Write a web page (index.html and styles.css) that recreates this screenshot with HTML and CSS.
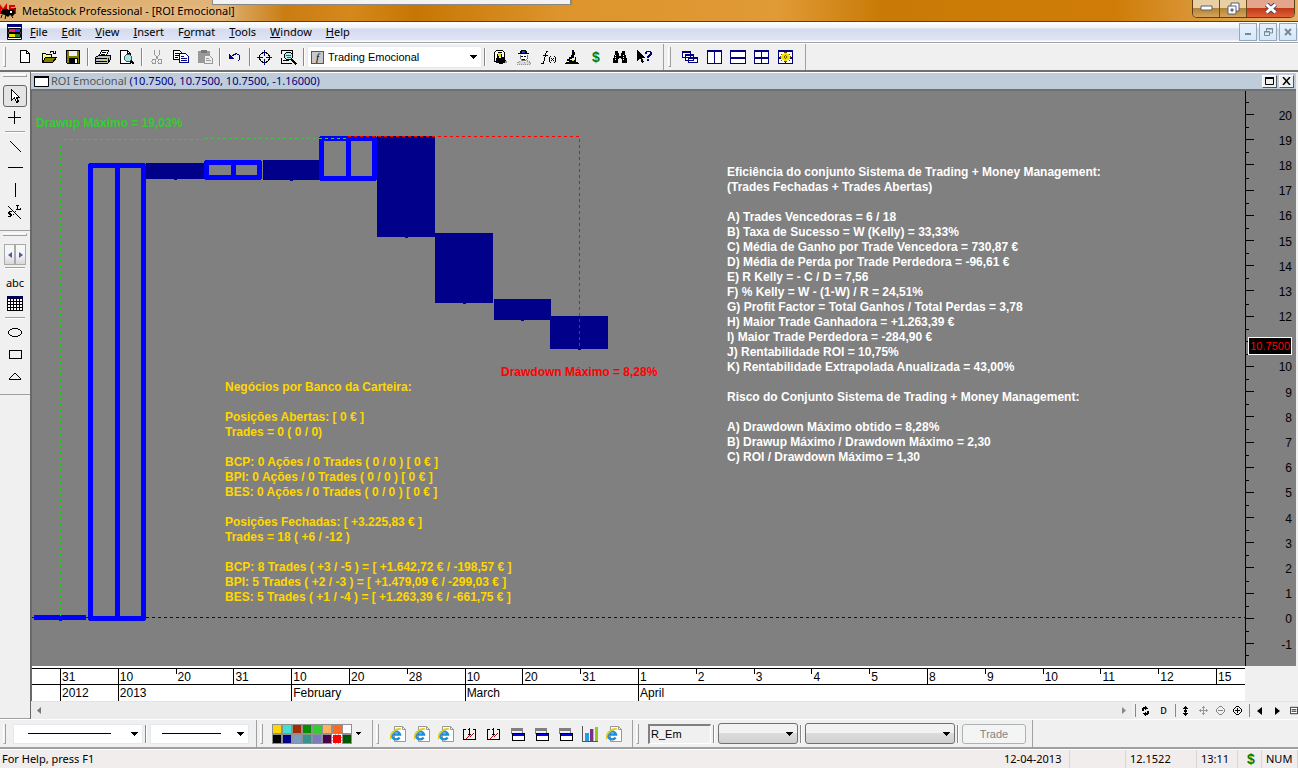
FILE: index.html
```html
<!DOCTYPE html>
<html lang="en">
<head>
  <meta charset="UTF-8">
  <meta name="viewport" content="width=device-width, initial-scale=1.0">
  <title>MetaStock Professional - [ROI Emocional]</title>
  <link rel="stylesheet" href="styles.css">
</head>
<body>
  <!-- Shared icons -->
  <svg class="symbols" aria-hidden="true">
    <symbol id="i-ie" viewBox="0 0 16 16">
      <path d="M4.500 .5h8l3 3v12h-11z" fill="#fff" stroke="#999"/>
      <path d="M12.500 .5v3h3" fill="none" stroke="#999"/>
      <path d="M9.500 11.500A4 4 0 1 1 10 8.500H3" fill="none" stroke="#1f8fd8" stroke-width="2.400"/>
      <path d="M1 13C-1 9 5 2 11 3" fill="none" stroke="#e8c818" stroke-width="1.600"/>
    </symbol>
    <symbol id="i-import" viewBox="0 0 16 16">
      <path d="M4 12h1v-1h1v-1h1V9h1v1h1V9h1V8h1V7h1v1h-1v1h-1v1H9v1H8v-1H7v1H6v1H5v1H4z" fill="#c00000"/>
      <path d="M1 3h3v1H2v9h11V4h-2V3h3v11H1zM7 2h1v7H7zM6 3h1v1H6zM6 8h3v1H6z"/>
    </symbol>
    <symbol id="i-windows" viewBox="0 0 16 16">
      <path d="M1 2h12v3H1z" fill="#808080"/>
      <path d="M1 5h1v3H1zM12 5h1v2h-1z" fill="#808080"/>
      <path d="M2.500 7.500h12v7h-12z" fill="#fff" stroke="#000"/>
      <path d="M3 8h11v2H3z" fill="#0000ff"/>
    </symbol>
    <symbol id="i-down" viewBox="0 0 7 4"><path d="M0 0h7v1H0zM1 1h5v1H1zM2 2h3v1H2zM3 3h1v1H3z"/></symbol>
  </svg>

  <!-- Title bar -->
  <header class="titlebar">
    <svg class="app-icon" width="20" height="18" viewBox="0 0 20 18" aria-hidden="true">
      <path d="M0 12V4l3 4 3-4v8M15 4h-5v3h5v4h-5" fill="none" stroke="#e00000" stroke-width="2"/>
      <path d="M1 9q4-4 8-1l4-1q2 1 2 4l-2 3-3-1-2 2-3-2-4-1z"/>
      <path d="M2 13l-1 3M6 13l-1 4M11 13l2 3M13 8l3-2" stroke="#000" fill="none"/>
      <path d="M10 9h2v2h-2z" fill="#fff"/>
    </svg>
    <h1 class="title">MetaStock Professional - [ROI Emocional]</h1>
    <div class="behind-window"></div>
    <div class="window-buttons">
      <button aria-label="Minimize"><svg width="13" height="7" viewBox="0 0 13 7"><path d="M1 1h11v4H1z" fill="#fff" stroke="#555f70"/></svg></button>
      <button aria-label="Restore"><svg width="13" height="13" viewBox="0 0 13 13"><path d="M4 1h8v8H4z" fill="#fff" stroke="#555f70"/><path d="M1 4h8v8H1z" fill="#fff" stroke="#555f70"/><path d="M4 7h2v2H4z" fill="#c89858" stroke="#555f70"/></svg></button>
      <button class="close" aria-label="Close"><svg width="14" height="11" viewBox="0 0 14 11"><path d="M2.500 1.500l9 8M11.500 1.500l-9 8" stroke="#5a4a58" stroke-width="5"/><path d="M2.500 1.500l9 8M11.500 1.500l-9 8" stroke="#fff" stroke-width="3"/></svg></button>
    </div>
  </header>

  <!-- Menu -->
  <nav class="menubar">
    <svg class="doc-icon" width="16" height="16" viewBox="0 0 16 16" aria-hidden="true">
      <path d="M.5 .5h14v15H.5z" fill="#fff" stroke="#000080"/>
      <path d="M0 0h15v3H0z" fill="#000080"/>
      <path d="M2 5h6v3H2z" fill="#f02060"/><path d="M8 5h5v3H8z" fill="#2040ff"/>
      <path d="M2 10h6v3H2z" fill="#e8e000"/><path d="M8 10h5v3H8z" fill="#208020"/>
      <path d="M1.500 4.500h12v4h-12zM1.500 9.500h12v4h-12z" fill="none" stroke="#000"/>
    </svg>
    <a href="#"><u>F</u>ile</a>
    <a href="#"><u>E</u>dit</a>
    <a href="#"><u>V</u>iew</a>
    <a href="#"><u>I</u>nsert</a>
    <a href="#">F<u>o</u>rmat</a>
    <a href="#"><u>T</u>ools</a>
    <a href="#"><u>W</u>indow</a>
    <a href="#"><u>H</u>elp</a>
    <div class="mdi-buttons">
      <button aria-label="Minimize chart"><svg width="8" height="8" viewBox="0 0 8 8"><path d="M1 5h6v2H1z" fill="#76899a"/></svg></button>
      <button aria-label="Restore chart"><svg width="9" height="8" viewBox="0 0 9 8"><path d="M2.500 3V.5h6V5H6M2 1h7M.5 3.500h5v4h-5zM0 4h6" fill="none" stroke="#76899a"/></svg></button>
      <button aria-label="Close chart"><svg width="8" height="8" viewBox="0 0 8 8"><path d="M1 1l6 6M7 1L1 7" stroke="#76899a" stroke-width="2"/></svg></button>
    </div>
  </nav>

  <!-- Main toolbar -->
  <div class="toolbar">
    <div class="band">
      <span class="grip"></span>
      <button aria-label="New"><svg class="px" viewBox="0 0 16 16"><path d="M3.500 1.500h6l3 3v9h-9z" fill="#fff" stroke="#000"/><path d="M9.500 1.500v3h3" fill="none" stroke="#000"/></svg></button>
      <button aria-label="Open"><svg class="px" viewBox="0 0 16 16"><path d="M1.500 13.500v-9h3l1 1h5v3" fill="#ffff80" stroke="#000"/><path d="M1.500 13.500l3-5h11l-4 5z" fill="#808000" stroke="#000"/><path d="M9 3.500q2-2 4 0M14.500 2v2.500H12" fill="none" stroke="#000"/></svg></button>
      <button aria-label="Save"><svg class="px" viewBox="0 0 16 16"><path d="M1.500 1.500h13v13h-12l-1-1z" fill="#808000" stroke="#000"/><path d="M4 2h8v5H4z" fill="#f0f0f0"/><path d="M4 9h9v5H4z"/><path d="M10 10h2v4h-2z" fill="#fff"/></svg></button>
      <span class="sep"></span>
      <button aria-label="Print"><svg class="px" viewBox="0 0 16 16"><path d="M4.500 6.500l2-5h7l-2 5" fill="#fff" stroke="#000"/><path d="M7 3.500h4M6 5.500h4" stroke="#000"/><path d="M.5 8.500l3-2h12v4l-3 4H.5z" fill="#c0c0c0" stroke="#000"/><path d="M1 9.500h11M1 12.500h11M13 9v4M15 7v3" stroke="#000"/><path d="M8 11h3v1H8z" fill="#e0e000"/></svg></button>
      <button aria-label="Print preview"><svg class="px" viewBox="0 0 16 16"><path d="M1.500 1.500h7l3 3v10h-10z" fill="#fff" stroke="#000"/><path d="M8.500 1.500v3h3" fill="none" stroke="#000"/><circle cx="9" cy="9" r="3.500" fill="#a0e8e8" stroke="#555"/><path d="M12 12l3 3" stroke="#000" stroke-width="2"/></svg></button>
      <span class="sep"></span>
      <button aria-label="Cut" disabled><svg class="px" viewBox="0 0 16 16"><path d="M5.500 1v4l4 6M10.500 1v4l-4 6" fill="none" stroke="#999"/><circle cx="5" cy="12.500" r="2" fill="none" stroke="#999"/><circle cx="11" cy="12.500" r="2" fill="none" stroke="#999"/></svg></button>
      <button aria-label="Copy"><svg class="px" viewBox="0 0 16 16"><path d="M.5 1.500h6l2 2v7h-8z" fill="#fff" stroke="#000"/><path d="M2 4.500h4M2 6.500h4M2 8.500h3" stroke="#000"/><path d="M6.500 4.500h6l3 3v6h-9z" fill="#fff" stroke="#000080"/><path d="M8 7.500h3M8 9.500h6M8 11.500h6" stroke="#000080"/></svg></button>
      <button aria-label="Paste" disabled><svg class="px" viewBox="0 0 16 16"><path d="M1 2h12v12H1z" fill="#999"/><path d="M4 1h6v3H4z" fill="#777"/><path d="M7.500 6.500h5l3 3v5h-8z" fill="#eee" stroke="#999"/><path d="M9 9.500h3M9 11.500h5" stroke="#999"/></svg></button>
      <span class="sep"></span>
      <button aria-label="Undo"><svg class="px" viewBox="0 0 16 16"><path d="M4 8q5-5 8-2 2 3-1 6" fill="none" stroke="#000080"/><path d="M2 5v5h5z" fill="#000080"/></svg></button>
      <span class="sep"></span>
      <button aria-label="Crosshair"><svg class="px" viewBox="0 0 16 16"><circle cx="7.500" cy="8.500" r="5" fill="none" stroke="#000"/><path d="M7.500 1v6M7.500 10v6M0 8.500h6M9 8.500h6" stroke="#000080"/></svg></button>
      <button aria-label="Explorer"><svg class="px" viewBox="0 0 16 16"><path d="M.5 4.500v-3h11v3M.5 8.500v6h10M2 11.500h5" fill="none" stroke="#000"/><circle cx="7.500" cy="7" r="4" fill="#b0f0f0" stroke="#000"/><path d="M5 6.500h5M6 8.500h4" stroke="#008080"/><path d="M10.500 10.500l5 5" stroke="#000" stroke-width="2"/></svg></button>
      <span class="sep"></span>
      <div class="combo template">
        <span class="combo-icon">f</span>
        <select aria-label="Template"><option>Trading Emocional</option></select>
        <svg class="arrow"><use href="#i-down"/></svg>
      </div>
      <span class="sep"></span>
      <button aria-label="Downloader"><svg class="px" viewBox="0 0 16 16"><path d="M4.500 1.500h6l2 2v9h-10v-9z" fill="#fff" stroke="#000"/><path d="M5.500 4.500v5M9.500 4.500v4M6 3.500h4" stroke="#000"/><path d="M6 4h3v4H6z" fill="#f0e800"/><path d="M4 9h2V7h1v2h3V8h2v3h2v3h-3v1H7v-1H4z"/><path d="M13 12h2v2h-2z" fill="#999"/></svg></button>
      <button aria-label="Expert advisor"><svg class="px" viewBox="0 0 16 16"><path d="M5 1h5v1h1v2h2v1H2V4h2V2h1z"/><path d="M6 2h3v2H6z" fill="#2040d0"/><path d="M4.500 5.500v4l2 2h3l2-2v-4" fill="#fff" stroke="#777"/><path d="M5 7h2v1H5zM8 7h2v1H8zM6 10h3v1H6z"/><path d="M1.500 15.500v-2l4-2 2 2h1l2-2 4 2v2z" fill="#d8d8d8" stroke="#999" stroke-dasharray="1 1"/></svg></button>
      <button aria-label="Indicator builder"><svg class="px" viewBox="0 0 16 16"><path d="M8 2H6.500L3.500 14H1M3 6.500h5" fill="none" stroke="#000"/><path d="M9 8h1v5H9zM10 7h1v1h-1zM10 13h1v1h-1zM15 8h1v5h-1zM14 7h1v1h-1zM14 13h1v1h-1zM11 9h1v1h-1zM13 9h1v1h-1zM12 10h1v1h-1zM11 11h1v1h-1zM13 11h1v1h-1z"/></svg></button>
      <button aria-label="Explorer scope"><svg class="px" viewBox="0 0 16 16"><path d="M8 1h2v2h1v3h-1v3H7V6h1zM5 8h3v2H5zM3 10h3v1h3v1H3zM11 8h1v4h-1zM10 11h1v1h-1zM5 12h7v1H5zM2 13h12v1h1v1H1v-1h1z"/><path d="M8 11h2v1H8z" fill="#e0e000"/></svg></button>
      <button class="dollar" aria-label="System tester">$</button>
      <button aria-label="Find"><svg class="px" viewBox="0 0 16 16"><path d="M3 2h3v2h1v3h2V4h1V2h3v3l2 5v4h-5v-4H9v-1H7v1H6v4H1v-4l2-5z"/><path d="M3.500 6v5M11.500 6v5" stroke="#fff" stroke-dasharray="1 1"/></svg></button>
      <button aria-label="Context help"><svg class="px" viewBox="0 0 16 16"><path d="M1 1v11l3-3 2 5 2-1-2-4h3z"/><path d="M9 3h1V2h5v1h1v3h-1v1h-1v1h-1v1h-2V7h1V6h1V5h1V3h-3v2H9zM11 10h2v2h-2z" fill="#000080"/></svg></button>
    </div>
    <div class="band second">
      <span class="grip"></span>
      <button aria-label="Cascade"><svg class="px" viewBox="0 0 16 16"><path d="M.5 2.500h8v6h-8zM3.500 5.500h8v6h-8zM6.500 8.500h9v5h-9z" fill="#fff" stroke="#000080"/><path d="M0 2h9v2H0zM3 5h9v2H3zM6 8h10v2H6z" fill="#000080"/></svg></button>
      <button aria-label="Tile vertically"><svg class="px" viewBox="0 0 16 16"><path d="M1.500 1.500h14v13h-14zM8.500 2v12" fill="#fff" stroke="#000080"/><path d="M1 1h15v2H1z" fill="#000080"/></svg></button>
      <button aria-label="Tile horizontally"><svg class="px" viewBox="0 0 16 16"><path d="M.5 1.500h15v13H.5z" fill="#fff" stroke="#000080"/><path d="M0 1h16v2H0zM0 8h16v2H0z" fill="#000080"/></svg></button>
      <button aria-label="Tile"><svg class="px" viewBox="0 0 16 16"><path d="M.5 1.500h14v13H.5zM7.500 2v12" fill="#fff" stroke="#000080"/><path d="M0 1h15v2H0zM0 8h15v2H0z" fill="#000080"/></svg></button>
      <button aria-label="Layout"><svg class="px" viewBox="0 0 16 16"><path d="M.5 1.500h14v13H.5zM7.500 2v12" fill="#fff" stroke="#000080"/><path d="M0 1h15v2H0zM0 8h15v2H0z" fill="#000080"/><path d="M6 4h3v1h2v2h1v3h-1v1H9v1H6v-1H4v-1H3V7h1V5h2z" fill="#f0e000"/><path d="M6 3h3v1H6zM3 5h1v1H3zM11 5h1v1h-1zM2 7h1v2H2zM12 7h1v2h-1zM3 11h1v1H3zM11 11h1v1h-1zM6 12h3v1H6zM6 7h1v2H6zM8 7h1v2H8zM7 6h1v1H7zM7 9h1v1H7z" fill="#705000"/></svg></button>
    </div>
  </div>

  <main class="workspace">
    <!-- Drawing tools -->
    <aside class="tools">
      <div class="tool-band">
        <span class="hgrip"></span>
        <button class="pressed" aria-label="Pointer"><svg class="px" viewBox="0 0 16 16"><path d="M4.500 1.500v11l3-3 2 5 2-1-2-4h3z" fill="#fff" stroke="#000"/></svg></button>
        <button aria-label="Cross"><svg class="px" viewBox="0 0 16 16"><path d="M7.500 1v13M1 7.500h13" stroke="#000"/></svg></button>
        <span class="hsep"></span>
        <button aria-label="Trendline"><svg class="px" viewBox="0 0 16 16"><path d="M3 3l11 11" stroke="#000"/></svg></button>
        <button aria-label="Horizontal line"><svg class="px" viewBox="0 0 16 16"><path d="M1 7.500h15" stroke="#000"/></svg></button>
        <button aria-label="Vertical line"><svg class="px" viewBox="0 0 16 16"><path d="M8.500 1v14" stroke="#000"/></svg></button>
        <button aria-label="Semi-log trendline"><svg class="px" viewBox="0 0 16 16"><path d="M1 2l13 13" stroke="#000"/><path d="M9 1h3v1h-1v3h2V4h1v2H9V5h1V2H9zM2 7h3v1H3v1h1v1h1v2H4v1H1v-1h2v-1H2v-1H1V8h1zM6 10h1v1H6zM8 7h1v1H8z"/></svg></button>
      </div>
      <div class="tool-band lower">
        <span class="hgrip"></span>
        <div class="spinner">
          <button aria-label="Previous"><svg width="4" height="6" viewBox="0 0 4 6"><path d="M4 0v6L0 3z" fill="#3f5fa8"/></svg></button>
          <button aria-label="Next"><svg width="4" height="6" viewBox="0 0 4 6"><path d="M0 0v6l4-3z" fill="#3f5fa8"/></svg></button>
        </div>
        <span class="hsep"></span>
        <button class="abc">abc</button>
        <button aria-label="Grid"><svg class="px" viewBox="0 0 16 16"><path d="M.5 .5h15v14H.5zM3.500 2v12M6.500 2v12M9.500 2v12M12.500 2v12M0 5.500h16M0 8.500h16M0 11.500h16" fill="#fff" stroke="#000"/><path d="M0 0h16v3H0z" fill="#000050"/></svg></button>
        <span class="hsep"></span>
        <button aria-label="Ellipse"><svg class="px" viewBox="0 0 16 16"><ellipse cx="8" cy="8.500" rx="6.500" ry="4" fill="none" stroke="#000"/></svg></button>
        <button aria-label="Rectangle"><svg class="px" viewBox="0 0 16 16"><path d="M2.500 4.500h12v8h-12z" fill="none" stroke="#000"/></svg></button>
        <button aria-label="Triangle"><svg class="px" viewBox="0 0 16 16"><path d="M2 11.500h12M2 11l6-6 6 6" fill="none" stroke="#000"/></svg></button>
      </div>
    </aside>

    <section class="chart-window">
      <div class="chart-title">
        <svg width="15" height="11" viewBox="0 0 15 11" aria-hidden="true"><path d="M.5 .5h14v10H.5z" fill="#fff" stroke="#000"/><path d="M0 0h15v2H0z"/></svg>
        <p><span class="name">ROI Emocional</span> (10.7500, 10.7500, 10.7500, -1.16000)</p>
        <button aria-label="Maximize"><svg width="9" height="8" viewBox="0 0 9 8"><path d="M.5 .5h8v7h-8z" fill="none" stroke="#000"/><path d="M0 0h9v2H0z"/></svg></button>
        <button aria-label="Close"><svg width="9" height="8" viewBox="0 0 9 8"><path d="M1 0l7 8M8 0L1 8" stroke="#000" stroke-width="1.500"/></svg></button>
      </div>

      <div class="chart">
        <div class="plot">
          <svg class="candles" width="1213" height="575" viewBox="0 0 1213 575" role="img" aria-label="ROI candlestick chart">
            <path d="M0 526.500h1213" class="baseline"/>
            <!-- Down candles -->
            <g fill="#00008b">
              <path d="M114 72h58v16h-58zM142 88h3v1h-3z"/>
              <path d="M231 69h56v20h-56zM258 89h3v1h-3z"/>
              <path d="M345 45h58v101h-58zM373 146h3v1h-3z"/>
              <path d="M403 142h58v70h-58zM431 212h3v1h-3z"/>
              <path d="M462 208h57v21h-57zM489 229h3v1h-3z"/>
              <path d="M518 225h58v33h-58zM546 258h3v1h-3z"/>
            </g>
            <!-- Up candles -->
            <path d="M2 524h52v5H2zM27 529h3v1h-3z" fill="#00f"/>
            <g fill="none" stroke="#00f" stroke-width="5" stroke-linejoin="round">
              <path d="M58.500 74.500h53v453h-53zM85.500 74v453"/>
              <path d="M174.500 71.500h53v15h-53zM201.500 72v15"/>
              <path d="M289.500 47.500h53v40h-53zM316.500 48v40"/>
            </g>
            <g fill="none" stroke-dasharray="3 3">
              <path d="M28.500 525V51" stroke="#00e000"/>
              <path d="M32 48.500h140M173 47.500h144" stroke="#32cd32"/>
              <path d="M316 45.500h232M547.500 48v209" stroke="#f00"/>
            </g>
          </svg>

          <p class="note drawup">Drawup Máximo = 19,03%</p>
          <p class="note drawdown">Drawdown Máximo = 8,28%</p>

          <p class="note portfolio">Negócios por Banco da Carteira:

Posições Abertas: [ 0 € ]
Trades = 0 ( 0 / 0)

BCP: 0 Ações / 0 Trades ( 0 / 0 ) [ 0 € ]
BPI: 0 Ações / 0 Trades ( 0 / 0 ) [ 0 € ]
BES: 0 Ações / 0 Trades ( 0 / 0 ) [ 0 € ]

Posições Fechadas: [ +3.225,83 € ]
Trades = 18 ( +6 / -12 )

BCP: 8 Trades ( +3 / -5 ) = [ +1.642,72 € / -198,57 € ]
BPI: 5 Trades ( +2 / -3 ) = [ +1.479,09 € / -299,03 € ]
BES: 5 Trades ( +1 / -4 ) = [ +1.263,39 € / -661,75 € ]</p>

          <p class="note stats">Eficiência do conjunto Sistema de Trading + Money Management:
(Trades Fechadas + Trades Abertas)

A) Trades Vencedoras = 6 / 18
B) Taxa de Sucesso = W (Kelly) = 33,33%
C) Média de Ganho por Trade Vencedora = 730,87 €
D) Média de Perda por Trade Perdedora = -96,61 €
E) R Kelly = - C / D = 7,56
F) % Kelly = W - (1-W) / R = 24,51%
G) Profit Factor = Total Ganhos / Total Perdas = 3,78
H) Maior Trade Ganhadora = +1.263,39 €
I) Maior Trade Perdedora = -284,90 €
J) Rentabilidade ROI = 10,75%
K) Rentabilidade Extrapolada Anualizada = 43,00%

Risco do Conjunto Sistema de Trading + Money Management:

A) Drawdown Máximo obtido = 8,28%
B) Drawup Máximo / Drawdown Máximo = 2,30
C) ROI / Drawdown Máximo = 1,30</p>
        </div>

        <ol class="price-axis">
          <li>20</li><li>19</li><li>18</li><li>17</li><li>16</li><li>15</li><li>14</li><li>13</li><li>12</li>
          <li><span class="last-price">10.7500</span></li>
          <li>10</li><li>9</li><li>8</li><li>7</li><li>6</li><li>5</li><li>4</li><li>3</li><li>2</li><li>1</li><li>0</li><li>-1</li>
        </ol>
      </div>

      <!-- Date axis -->
      <div class="date-axis">
        <div class="days">
          <span class="pad"></span>
          <span class="full">31</span><span class="full">10</span><span>20</span><span class="full">31</span>
          <span class="full">10</span><span class="full">20</span><span>28</span><span class="full">10</span>
          <span class="full">20</span><span>31</span><span class="full">1</span><span>2</span><span>3</span>
          <span>4</span><span>5</span><span class="full">8</span><span>9</span><span>10</span><span>11</span>
          <span>12</span><span class="full">15</span>
        </div>
        <div class="months">
          <span class="y2012">2012</span>
          <span class="y2013">2013</span>
          <span class="feb">February</span>
          <span class="mar">March</span>
          <span class="apr">April</span>
        </div>
      </div>

      <div class="scroll-row">
        <div class="scrollbar">
          <button aria-label="Scroll left"><svg width="4" height="7" viewBox="0 0 4 7"><path d="M4 0v7L0 3.500z" fill="#777"/></svg></button>
          <button aria-label="Scroll right"><svg width="4" height="7" viewBox="0 0 4 7"><path d="M0 0v7l4-3.500z" fill="#888"/></svg></button>
        </div>
        <div class="zoom-tools">
          <button class="first" aria-label="Refresh"><svg class="small" viewBox="0 0 9 10"><path d="M1 2h1V1h2V0h1v1h1v1h1v1H5v1H4V3H3v2H1zM7 5h1v3H7v1H5v1H4V9H3V8H2V7h2V6h1v1h1V5z"/></svg></button>
          <button class="periodicity">D</button>
          <button class="first" aria-label="Scale"><svg class="small" viewBox="0 0 9 10"><path d="M4 0h1v1h1v1h1v1H5v4h2v1H6v1H5v1H4V9H3V8H2V7h2V3H2V2h1V1h1z"/><path d="M3 4h3v2H3z"/></svg></button>
          <button aria-label="Move" disabled><svg class="small" viewBox="0 0 9 10"><path d="M4 0h1v1h1v1H5v2h2V3h1v1h1v1H8v1H7V5H5v2h1v1H5v1H4V8H3V7h1V5H2v1H1V5H0V4h1V3h1v1h2V2H3V1h1z" fill="#999"/></svg></button>
          <button aria-label="Zoom out" disabled><svg class="small" viewBox="0 0 9 10"><path d="M3 0h3v1H3zM2 1h1v1H2zM6 1h1v1H6zM1 2h1v1H1zM7 2h1v1H7zM0 3h1v3H0zM8 3h1v3H8zM1 6h1v1H1zM7 6h1v1H7zM2 7h1v1H2zM6 7h1v1H6zM3 8h3v1H3zM2 4h5v1H2z" fill="#888"/></svg></button>
          <button aria-label="Zoom in"><svg class="small" viewBox="0 0 9 10"><path d="M3 0h3v1H3zM2 1h1v1H2zM6 1h1v1H6zM1 2h1v1H1zM7 2h1v1H7zM0 3h1v3H0zM8 3h1v3H8zM1 6h1v1H1zM7 6h1v1H7zM2 7h1v1H2zM6 7h1v1H6zM3 8h3v1H3zM2 4h5v1H2zM4 2h1v5H4z"/></svg></button>
          <button class="first" aria-label="Previous security"><svg width="5" height="8" viewBox="0 0 5 8"><path d="M5 0v8L0 4z"/></svg></button>
          <button aria-label="Next security"><svg width="5" height="8" viewBox="0 0 5 8"><path d="M0 0v8l5-4z"/></svg></button>
          <button class="clipped" aria-label="Security list"><svg width="10" height="9" viewBox="0 0 10 9"><path d="M.5 .5h9v8h-9zM2 3.500h6M2 5.500h6" fill="#fff" stroke="#000"/></svg></button>
        </div>
      </div>
    </section>
  </main>

  <!-- Bottom toolbar -->
  <div class="toolbar bottom">
    <div class="band">
      <span class="grip"></span>
      <div class="combo line-style"><select aria-label="Line style"><option></option></select><span class="sample"></span><svg class="arrow"><use href="#i-down"/></svg></div>
      <span class="sep"></span>
      <div class="combo line-weight"><select aria-label="Line weight"><option></option></select><span class="sample"></span><svg class="arrow"><use href="#i-down"/></svg></div>
    </div>
    <div class="band">
      <span class="grip"></span>
      <div class="palette">
        <button class="gold" aria-label="Gold"></button><button class="turquoise" aria-label="Turquoise"></button><button class="rust" aria-label="Rust"></button><button class="green" aria-label="Green"></button><button class="lime" aria-label="Lime green"></button><button class="peach" aria-label="Peach"></button><button class="orange" aria-label="Orange"></button><button class="white" aria-label="White"></button>
        <button class="black" aria-label="Black"></button><button class="navy" aria-label="Navy"></button><button class="steel" aria-label="Steel"></button><button class="teal" aria-label="Teal"></button><button class="lilac" aria-label="Lilac"></button><button class="plum" aria-label="Plum"></button><button class="red" aria-label="Red"></button><button class="forest" aria-label="Dark green"></button>
      </div>
      <button class="more" aria-label="More colors"><svg width="5" height="3" viewBox="0 0 5 3"><path d="M0 0h5v1H0zM1 1h3v1H1zM2 2h1v1H2z"/></svg></button>
    </div>
    <div class="band links">
      <span class="grip"></span>
      <button aria-label="Web page 1"><svg class="icon"><use href="#i-ie"/></svg></button>
      <button aria-label="Web page 2"><svg class="icon"><use href="#i-ie"/></svg></button>
      <button aria-label="Web page 3"><svg class="icon"><use href="#i-ie"/></svg></button>
      <button aria-label="Import 1"><svg class="px"><use href="#i-import"/></svg></button>
      <button aria-label="Import 2"><svg class="px"><use href="#i-import"/></svg></button>
      <button aria-label="Windows 1"><svg class="px"><use href="#i-windows"/></svg></button>
      <button aria-label="Windows 2"><svg class="px"><use href="#i-windows"/></svg></button>
      <button aria-label="Windows 3"><svg class="px"><use href="#i-windows"/></svg></button>
      <button aria-label="Bar chart"><svg class="px" viewBox="0 0 16 16"><path d="M.5 0v15.500H16" fill="none" stroke="#555"/><path d="M3 7h4v8H3z" fill="#20a0e8"/><path d="M8 3h3v12H8z" fill="#7a3088"/><path d="M11 3h1v12h-1z" fill="#c8a0d0"/><path d="M13 1h3v14h-3z" fill="#98c820"/></svg></button>
      <button aria-label="Web page 4"><svg class="icon"><use href="#i-ie"/></svg></button>
    </div>
    <div class="band trade">
      <span class="grip"></span>
      <input class="symbol-box" aria-label="Symbol" value="R_Em">
      <span class="sep"></span>
      <div class="combo raised"><select aria-label="Order side"><option></option></select><svg class="arrow"><use href="#i-down"/></svg></div>
      <span class="sep"></span>
      <div class="combo raised wide"><select aria-label="Account"><option></option></select><svg class="arrow"><use href="#i-down"/></svg></div>
      <span class="sep"></span>
      <button class="trade-button" disabled>Trade</button>
    </div>
  </div>

  <!-- Status bar -->
  <footer class="statusbar">
    <span class="help">For Help, press F1</span>
    <span class="date">12-04-2013</span>
    <span class="blank"></span>
    <span class="price">12.1522</span>
    <span class="time">13:11</span>
    <span class="dollar">$</span>
    <span class="num">NUM</span>
  </footer>
</body>
</html>
```
FILE: styles.css
```css
* {
  box-sizing: border-box;
}

body {
  margin: 0;
  height: 100vh;
  display: flex;
  flex-direction: column;
  overflow: hidden;
  background-color: #f0f0f0;
  color: #000;
  font-family: "Noto Sans", "Open Sans", sans-serif;
  font-size: 11px;
}

button {
  display: flex;
  align-items: center;
  justify-content: center;
  padding: 0;
  border: none;
  background: none;
  color: #000;
  font: inherit;
}

p, h1, ol {
  margin: 0;
  padding: 0;
}

.symbols {
  position: absolute;
  width: 0;
  height: 0;
}

.px, .icon {
  width: 16px;
  height: 16px;
}

.small {
  width: 9px;
  height: 10px;
}

.px, .small, .candles, .arrow {
  shape-rendering: crispEdges;
}

.dollar {
  color: #008000;
  font-family: "Liberation Sans", Arial, sans-serif;
  font-size: 14px;
  font-weight: bold;
}

/* Title bar */
.titlebar {
  position: relative;
  flex: none;
  height: 22px;
  display: flex;
  align-items: center;
  border-bottom: 1px solid #5e3f12;
  background: linear-gradient(90deg, #dcae70 0, #e0b378 17%, #c97d12 22%, #d5881c 27%, #c67603 32%, #dd942c 43%, #e09a36 60%, #c97a06 68%, #cf7d08 86%, #d8912e 91%, #e5b165 100%);
}

.title {
  flex: 1;
  padding-left: 2px;
  font-size: 11px;
  font-weight: normal;
  line-height: 20px;
  text-shadow: 0 0 6px #f8dcb0;
}

.behind-window {
  position: absolute;
  left: 212px;
  top: 0;
  width: 360px;
  height: 5px;
  border: solid #888;
  border-width: 0 2px 1px 1px;
  background-color: #f2f2f2;
}

.window-buttons {
  display: flex;
  align-self: flex-start;
  height: 18px;
  margin-right: 3px;
  border: 1px solid #5e3f12;
  border-top: none;
  border-radius: 0 0 5px 5px;
  overflow: hidden;
}

.window-buttons button {
  width: 27px;
  border-right: 1px solid #6d4a1c;
  background: linear-gradient(#e8cfa4 45%, #b4833a 50%, #d5a55c);
}

.window-buttons .close {
  width: 47px;
  border-right: none;
  background: linear-gradient(#e3a58c 45%, #c13a18 50%, #e0603a);
}

/* Menu */
.menubar {
  flex: none;
  height: 21px;
  display: flex;
  align-items: center;
  gap: 14px;
  padding-left: 7px;
  border-bottom: 1px solid #a0a0a0;
  background: linear-gradient(#fff 0, #eef1f9 6px, #d5dbee 7px, #dfe5f5 18px, #fff 19px);
}

.menubar a {
  color: #000;
  line-height: 20px;
  text-decoration: none;
}

.doc-icon {
  margin-right: -7px;
}

.mdi-buttons {
  display: flex;
  gap: 2px;
  margin-left: auto;
  margin-right: 1px;
}

.mdi-buttons button {
  width: 18px;
  height: 18px;
  border: 1px solid #91a8bd;
  background: linear-gradient(#e6f1fa, #d5e8f7);
}

/* Toolbars */
.toolbar {
  flex: none;
  height: 29px;
  display: flex;
  border-top: 1px solid #fff;
  border-bottom: 2px solid #707070;
  background-color: #f0f0f0;
}

.band {
  display: flex;
  align-items: center;
  padding: 0 7px 0 3px;
  border-right: 1px solid #a0a0a0;
}

.band button {
  width: 24px;
  height: 22px;
}

.band .dollar {
  font-size: 14px;
}

.band.second {
  padding-left: 4px;
}

.grip {
  width: 3px;
  height: 20px;
  margin-right: 7px;
  border-right: 1px solid #a0a0a0;
  border-bottom: 1px solid #a0a0a0;
  border-left: 1px solid #fff;
}

.sep {
  width: 2px;
  height: 18px;
  margin: 0 2px;
  border-left: 1px solid #888;
  border-right: 1px solid #fff;
}

.combo {
  position: relative;
  display: flex;
  align-items: center;
}

.combo select {
  width: 100%;
  height: 100%;
  appearance: none;
  border: 1px solid #e3e9ef;
  border-radius: 0;
  background-color: #fff;
  color: #000;
  font-family: "Liberation Sans", Arial, sans-serif;
  font-size: 11px;
}

.arrow {
  position: absolute;
  right: 5px;
  width: 7px;
  height: 4px;
}

.template {
  width: 175px;
  height: 22px;
}

.template select {
  padding: 0 0 0 20px;
}

.combo-icon {
  position: absolute;
  left: 4px;
  width: 13px;
  height: 13px;
  border: 1px solid #555;
  background-color: #c8c8c8;
  font: italic 11px/11px "Liberation Serif", serif;
  text-align: center;
}

/* Drawing tools */
.workspace {
  flex: 1;
  min-height: 0;
  display: flex;
}

.tools {
  flex: none;
  width: 30px;
  border-bottom: 1px solid #a0a0a0;
}

.tool-band {
  display: flex;
  flex-direction: column;
  align-items: center;
  padding: 2px 0 7px;
  border-bottom: 1px solid #a0a0a0;
}

.tool-band button {
  width: 24px;
  height: 22px;
}

.tool-band .pressed {
  border: 1px solid #666;
  border-radius: 3px;
  background-color: #e4e4e4;
}

.hgrip {
  width: 24px;
  height: 3px;
  margin-bottom: 8px;
  border-bottom: 1px solid #a0a0a0;
  border-right: 1px solid #a0a0a0;
  border-top: 1px solid #fff;
}

.hsep {
  width: 20px;
  height: 2px;
  margin: 2px 0;
  border-top: 1px solid #a0a0a0;
  border-bottom: 1px solid #fff;
}

.spinner {
  display: flex;
}

.spinner button {
  width: 11px;
  height: 21px;
  border: 1px solid #aaa;
  background: linear-gradient(#f6f6f6 50%, #d8d8d8);
}

/* Chart window */
.chart-window {
  flex: 1;
  min-width: 0;
  display: flex;
  flex-direction: column;
  border-left: 1px solid #696969;
}

.chart-title {
  flex: none;
  height: 19px;
  display: flex;
  align-items: center;
  margin-right: 2px;
  padding: 0 2px 0 3px;
  border-top: 1px solid #fff;
  border-bottom: 2px solid #707070;
  background-color: #bfcddb;
  color: #000080;
}

.chart-title p {
  flex: 1;
  padding-left: 2px;
  line-height: 16px;
}

.chart-title .name {
  color: #555;
}

.chart-title button {
  width: 15px;
  height: 13px;
  margin-left: 2px;
  border: 1px solid #fff;
  border-right-color: #555;
  border-bottom-color: #555;
  background-color: #f0f0f0;
}

.chart {
  flex: 1;
  min-height: 0;
  display: flex;
  margin-right: 2px;
  border-left: 1px solid #696969;
  background-color: #808080;
}

.plot {
  position: relative;
  flex: 1;
  min-width: 0;
  overflow: hidden;
}

.candles {
  display: block;
}

.baseline {
  stroke: #0000a8;
  stroke-dasharray: 3 3;
}

/* Text placed on the chart */
.note {
  position: absolute;
  font-family: "Liberation Sans", Arial, sans-serif;
  font-size: 12px;
  font-weight: bold;
  line-height: 15px;
  white-space: pre;
}

.drawup {
  left: 4px;
  top: 25px;
  color: #32cd32;
}

.drawdown {
  left: 469px;
  top: 274px;
  color: #f00;
}

.portfolio {
  left: 193px;
  top: 289px;
  color: #ffd700;
}

.stats {
  left: 695px;
  top: 74px;
  color: #fff;
}

.price-axis {
  flex: none;
  width: 51px;
  display: flex;
  flex-direction: column;
  padding: 11px 0 10px;
  border-left: 1px solid #000;
  list-style: none;
  font-family: "Liberation Sans", Arial, sans-serif;
  font-size: 12px;
}

.price-axis li {
  flex: 1;
  display: flex;
  align-items: center;
  justify-content: flex-end;
  padding: 2px 4px 0 0;
  background:
    linear-gradient(#000, #000) 0 50% / 8px 1px no-repeat,
    linear-gradient(#000, #000) 0 0 / 3px 1px no-repeat;
}

.price-axis li:last-child {
  background:
    linear-gradient(#000, #000) 0 50% / 8px 1px no-repeat,
    linear-gradient(#000, #000) 0 0 / 3px 1px no-repeat,
    linear-gradient(#000, #000) 0 100% / 3px 1px no-repeat;
}

.last-price {
  position: relative;
  top: 4px;
  height: 18px;
  padding: 0 1px;
  border: 1px solid #fff;
  background-color: #000;
  color: #f00;
  font-size: 11px;
  line-height: 16px;
}

/* Date axis */
.date-axis {
  flex: none;
  margin-right: 53px;
  padding-top: 2px;
  border-left: 1px solid #696969;
  background-color: #fff;
  font-family: "Liberation Sans", Arial, sans-serif;
  font-size: 12px;
  line-height: 16px;
}

.days, .months {
  display: grid;
  grid-template-columns: 28px repeat(20, 2fr) 1fr;
}

.days {
  height: 17px;
  border-top: 1px solid #000;
  border-bottom: 1px solid #000;
}

.months {
  height: 16px;
}

.days span {
  padding-left: 2px;
  background: linear-gradient(#000, #000) 0 0 / 1px 5px no-repeat;
}

.days .full {
  background-size: 1px 100%;
}

.days .pad {
  background: none;
}

.months span {
  padding-left: 1px;
  border-left: 1px solid #000;
}

.y2012 { grid-column: 2 / span 1; }
.y2013 { grid-column: 3 / span 3; }
.feb { grid-column: 6 / span 3; }
.mar { grid-column: 9 / span 3; }
.apr { grid-column: 12 / span 11; }

.scroll-row {
  flex: none;
  height: 18px;
  display: flex;
  border-top: 1px solid #e3e3e3;
}

.scrollbar {
  flex: 1;
  display: flex;
  justify-content: space-between;
  background-color: #ececec;
}

.scrollbar button {
  width: 16px;
}

.zoom-tools {
  display: flex;
  align-items: center;
  overflow: hidden;
}

.zoom-tools button {
  width: 17px;
  height: 13px;
}

.zoom-tools .first {
  width: 20px;
  margin-left: 3px;
  border-left: 1px solid #888;
}

.zoom-tools .clipped {
  width: 12px;
  justify-content: flex-start;
  padding-left: 4px;
}

.zoom-tools .periodicity {
  font: 11px "Liberation Mono", "Courier New", monospace;
}

/* Bottom toolbar */
.bottom {
  height: 30px;
  border-top: 1px solid #fff;
  border-bottom: 2px solid #a0a0a0;
}

.bottom .sep {
  margin: 0 3px 0 2px;
}

.line-style {
  width: 130px;
  height: 20px;
}

.line-weight {
  width: 99px;
  height: 20px;
}

.sample {
  position: absolute;
  left: 15px;
  right: 32px;
  height: 1px;
  background-color: #000;
}

.line-weight .sample {
  left: 12px;
  right: 28px;
}

.palette {
  display: grid;
  grid-template-columns: repeat(8, 10px);
  margin-left: 2px;
}

.band .palette button {
  width: 10px;
  height: 10px;
  border: 1px solid #909090;
}

.palette .gold { background-color: #ffd700; }
.palette .turquoise { background-color: #40e0d0; }
.palette .rust { background-color: #a52a00; }
.palette .green { background-color: #009000; }
.palette .lime { background-color: #32cd32; }
.palette .peach { background-color: #ffb060; }
.palette .orange { background-color: #ff6820; }
.palette .white { background-color: #fff; }
.palette .black { background-color: #000; }
.palette .navy { background-color: #00008b; }
.palette .steel { background-color: #7b9cc0; }
.palette .teal { background-color: #389090; }
.palette .lilac { background-color: #7b7bc0; }
.palette .plum { background-color: #480048; }
.palette .forest { background-color: #005800; }

.band .palette .red {
  border: 1px dashed #fff;
  background-color: #f00;
}

.band .more {
  width: 13px;
}

.band.links {
  padding-right: 6px;
}

.symbol-box {
  width: 63px;
  height: 20px;
  margin-left: 2px;
  padding: 0 1px;
  border: 2px solid #808080;
  border-right: 1px solid #fff;
  border-bottom: 1px solid #fff;
  background-color: #f0f0f0;
  font-family: "Liberation Sans", Arial, sans-serif;
  font-size: 11px;
}

.raised {
  width: 80px;
  height: 21px;
}

.raised.wide {
  width: 150px;
}

.raised select {
  border: 1px solid #707070;
  border-radius: 3px;
  background: linear-gradient(#f2f2f2 45%, #dcdcdc 50%, #cfcfcf);
}

.band.trade {
  padding-right: 6px;
}

.band .trade-button {
  width: 64px;
  height: 20px;
  border: 1px solid #adb2b5;
  border-radius: 3px;
  background-color: #f4f4f4;
  color: #838383;
  font-family: "Liberation Sans", Arial, sans-serif;
  font-size: 11px;
}

/* Status bar */
.statusbar {
  flex: none;
  height: 19px;
  display: flex;
  align-items: stretch;
  border-top: 1px solid #fff;
  background-color: #f1eded;
  line-height: 18px;
}

.statusbar span {
  padding: 0 0 0 4px;
  border-right: 1px solid #d8d4d4;
}

.statusbar .help {
  flex: 1;
  padding-left: 2px;
  border-right: none;
}

.statusbar .date {
  width: 70px;
}

.statusbar .blank {
  width: 56px;
}

.statusbar .price {
  width: 71px;
}

.statusbar .time {
  width: 41px;
}

.statusbar .dollar {
  width: 24px;
  padding-left: 9px;
}

.statusbar .num {
  width: 36px;
}
```
